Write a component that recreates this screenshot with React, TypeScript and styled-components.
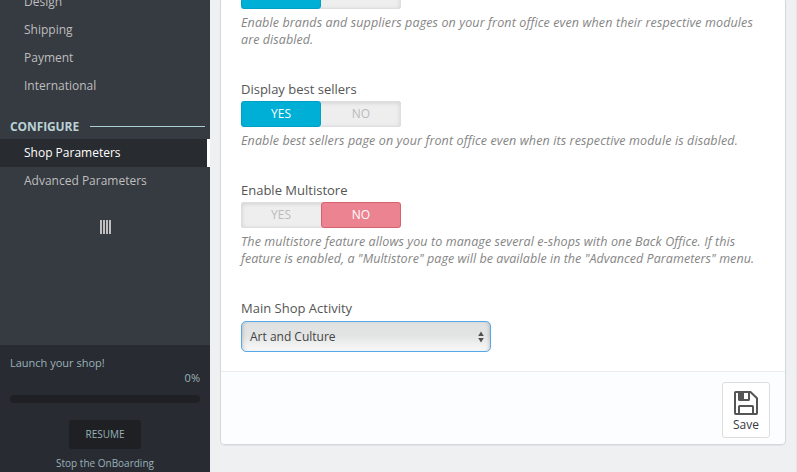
import React from "react";
import styled, { createGlobalStyle } from "styled-components";

const Global = createGlobalStyle`
  *, *::before, *::after { box-sizing: border-box; }
  html, body { margin: 0; height: 100%; overflow: hidden; }
  body { font-family: "Open Sans", "Noto Sans", sans-serif; font-size: 13px; background: #eff0f2; }
`;

const Page = styled.div`
  display: flex;
  width: 797px;
  height: 472px;
  overflow: hidden;
  background: #eff0f2;
  border-right: 1px solid #e3e5e8;
`;

const Sidebar = styled.aside`
  display: flex;
  flex-direction: column;
  flex: none;
  width: 210px;
  height: 472px;
  background: #363a41;
`;

const Menu = styled.nav`
  flex: none;
  height: 345px;
  overflow: hidden;
`;

const MenuList = styled.div<{ $clipped?: boolean }>`
  margin-top: ${(p) => (p.$clipped ? "-12px" : "0")};
`;

const MenuItem = styled.div<{ $active?: boolean }>`
  height: 28px;
  padding-left: 24px;
  font-size: 12px;
  line-height: 28px;
  color: ${(p) => (p.$active ? "#fff" : "#bebebe")};
  background: ${(p) => (p.$active ? "#282b30" : "transparent")};
  border-right: ${(p) => (p.$active ? "3px solid #fff" : "0")};
`;

const MenuHeading = styled.div`
  display: flex;
  align-items: center;
  gap: 11px;
  height: 39px;
  padding: 14px 5px 0 10px;
  font-size: 12px;
  font-weight: 700;
  letter-spacing: -0.1px;
  color: #bad3d6;

  &::after {
    content: "";
    flex: 1;
    height: 1px;
    margin-bottom: 1px;
    background: #a9cfd3;
  }
`;

const CollapseHandle = styled.div`
  display: flex;
  gap: 1px;
  margin: 25px 0 0 100px;
`;

const HandleBar = styled.span`
  width: 2px;
  height: 14px;
  background: #bebebe;
`;

const Onboarding = styled.section`
  display: flex;
  flex-direction: column;
  flex: 1;
  padding: 10px 10px 0;
  background: #292b33;
  color: #99b2b7;
  font-size: 11px;
  line-height: 15px;
`;

const Percent = styled.div`
  text-align: right;
`;

const ProgressTrack = styled.div`
  height: 8px;
  margin-top: 10px;
  border-radius: 4px;
  background: #1e2023;
`;

const ResumeButton = styled.button`
  align-self: center;
  width: 72px;
  height: 29px;
  margin-top: 17px;
  padding: 0 0 2px;
  border: 0;
  border-radius: 3px;
  background: #1e2023;
  color: #99b2b7;
  font: 10px "Open Sans", sans-serif;
`;

const StopLink = styled.div`
  margin-top: 6px;
  text-align: center;
  font-size: 10px;
  line-height: 16px;
`;

const Panel = styled.main`
  display: flex;
  flex-direction: column;
  width: 566px;
  height: 448px;
  margin: -3px 0 0 10px;
  border: 1px solid #d3d8db;
  border-radius: 5px;
  background: #fff;
  box-shadow: 0 1px 1px rgba(0, 0, 0, 0.06);
  overflow: hidden;
`;

const Fields = styled.div`
  flex: 1;
  padding: 0 20px;
`;

const Field = styled.div<{ $gap?: number }>`
  margin-top: ${(p) => p.$gap ?? 0}px;
`;

const Label = styled.div<{ $height?: number }>`
  height: ${(p) => p.$height ?? 21}px;
  line-height: 18px;
  color: #555;
`;

const Switch = styled.div`
  display: flex;
  width: 160px;
  height: 26px;
  border-radius: 3px;
  background: #eee;
  box-shadow: inset 0 0 0 1px #dedede, inset 0 1px 4px 1px rgba(0, 0, 0, 0.12);
`;

const SwitchOption = styled.span<{ $tone?: "yes" | "no" }>`
  width: 80px;
  height: 26px;
  border: 1px solid ${(p) => (p.$tone === "yes" ? "#009fc4" : p.$tone === "no" ? "#d6626f" : "transparent")};
  border-radius: 3px;
  background: ${(p) => (p.$tone === "yes" ? "#00afd6" : p.$tone === "no" ? "#ec8390" : "transparent")};
  color: ${(p) => (p.$tone ? "#fff" : "#bbb")};
  font-size: 12px;
  line-height: 24px;
  text-align: center;
`;

const Help = styled.p`
  margin: 5px 0 0;
  width: 530px;
  color: #858585;
  font-size: 12.5px;
  font-style: italic;
  line-height: 17px;
`;

const HelpLine = styled.span<{ $tracking: number }>`
  display: block;
  white-space: nowrap;
  letter-spacing: ${(p) => p.$tracking}px;
`;

const Select = styled.div`
  display: flex;
  align-items: center;
  justify-content: space-between;
  width: 250px;
  height: 31px;
  padding: 0 6px 0 8px;
  border: 1px solid #56a9e8;
  border-radius: 5px;
  background: linear-gradient(#e0e1e2 0%, #e2e3e3 45%, #f9f9fa 100%);
  box-shadow: inset 3px 0 4px -3px rgba(0, 0, 0, 0.25), inset -3px 0 4px -3px rgba(0, 0, 0, 0.25);
  color: #444;
  font-size: 12px;
`;

const Footer = styled.footer`
  display: flex;
  justify-content: flex-end;
  flex: none;
  height: 73px;
  padding: 10px 15px 0 0;
  border-top: 1px solid #eaedef;
  background: #fcfdfe;
`;

const SaveButton = styled.button`
  display: flex;
  flex-direction: column;
  align-items: center;
  gap: 1px;
  width: 48px;
  height: 56px;
  padding: 8px 0 0;
  border: 1px solid #ddd;
  border-radius: 3px;
  background: #fff;
  color: #363a41;
  font: 12px/18px "Open Sans", sans-serif;
`;

const SaveIcon = () => (
  <svg width="24" height="24" viewBox="0 0 24 24" fill="none" stroke="#555" strokeWidth="2">
    <path d="M1.7 1H16.5L23 7.2V22.3Q23 23 22.3 23H1.7Q1 23 1 22.3V1.7Q1 1 1.7 1Z" />
    <path d="M5 1V8.4Q5 9 5.6 9H14.4Q15 9 15 8.4V1" />
    <path d="M5 1H10V9H5Z" fill="#555" stroke="none" />
    <path d="M5 23V15.6Q5 15 5.6 15H18.4Q19 15 19 15.6V23" />
  </svg>
);

const SelectArrows = () => (
  <svg width="6" height="12" viewBox="0 0 6 12" fill="#505050">
    <path d="M3 .5 5.8 5H.2ZM3 11.5 5.8 7H.2Z" />
  </svg>
);

type Value = "yes" | "no";

const YesNo = ({ value }: { value: Value }) => (
  <Switch>
    <SwitchOption $tone={value === "yes" ? "yes" : undefined}>YES</SwitchOption>
    <SwitchOption $tone={value === "no" ? "no" : undefined}>NO</SwitchOption>
  </Switch>
);

export default function App() {
  return (
    <>
      <Global />
      <Page>
        <Sidebar>
          <Menu>
            <MenuList $clipped>
              {["Design", "Shipping", "Payment", "International"].map((name) => (
                <MenuItem key={name}>{name}</MenuItem>
              ))}
            </MenuList>
            <MenuHeading>CONFIGURE</MenuHeading>
            <MenuList>
              <MenuItem $active>Shop Parameters</MenuItem>
              <MenuItem>Advanced Parameters</MenuItem>
            </MenuList>
            <CollapseHandle>
              {[0, 1, 2, 3].map((n) => (
                <HandleBar key={n} />
              ))}
            </CollapseHandle>
          </Menu>
          <Onboarding>
            <div>Launch your shop!</div>
            <Percent>0%</Percent>
            <ProgressTrack />
            <ResumeButton>RESUME</ResumeButton>
            <StopLink>Stop the OnBoarding</StopLink>
          </Onboarding>
        </Sidebar>
        <Panel>
          <Fields>
            <Field $gap={-15}>
              <YesNo value="yes" />
              <Help>
                <HelpLine $tracking={0.12}>
                  Enable brands and suppliers pages on your front office even when their respective modules
                </HelpLine>
                <HelpLine $tracking={0.08}>are disabled.</HelpLine>
              </Help>
            </Field>
            <Field $gap={32}>
              <Label>Display best sellers</Label>
              <YesNo value="yes" />
              <Help>
                <HelpLine $tracking={0.12}>
                  Enable best sellers page on your front office even when its respective module is disabled.
                </HelpLine>
              </Help>
            </Field>
            <Field $gap={32}>
              <Label>Enable Multistore</Label>
              <YesNo value="no" />
              <Help>
                <HelpLine $tracking={0.1}>
                  The multistore feature allows you to manage several e-shops with one Back Office. If this
                </HelpLine>
                <HelpLine $tracking={0.05}>
                  feature is enabled, a "Multistore" page will be available in the "Advanced Parameters" menu.
                </HelpLine>
              </Help>
            </Field>
            <Field $gap={32}>
              <Label $height={22}>Main Shop Activity</Label>
              <Select>
                <span>Art and Culture</span>
                <SelectArrows />
              </Select>
            </Field>
          </Fields>
          <Footer>
            <SaveButton>
              <SaveIcon />
              Save
            </SaveButton>
          </Footer>
        </Panel>
      </Page>
    </>
  );
}
